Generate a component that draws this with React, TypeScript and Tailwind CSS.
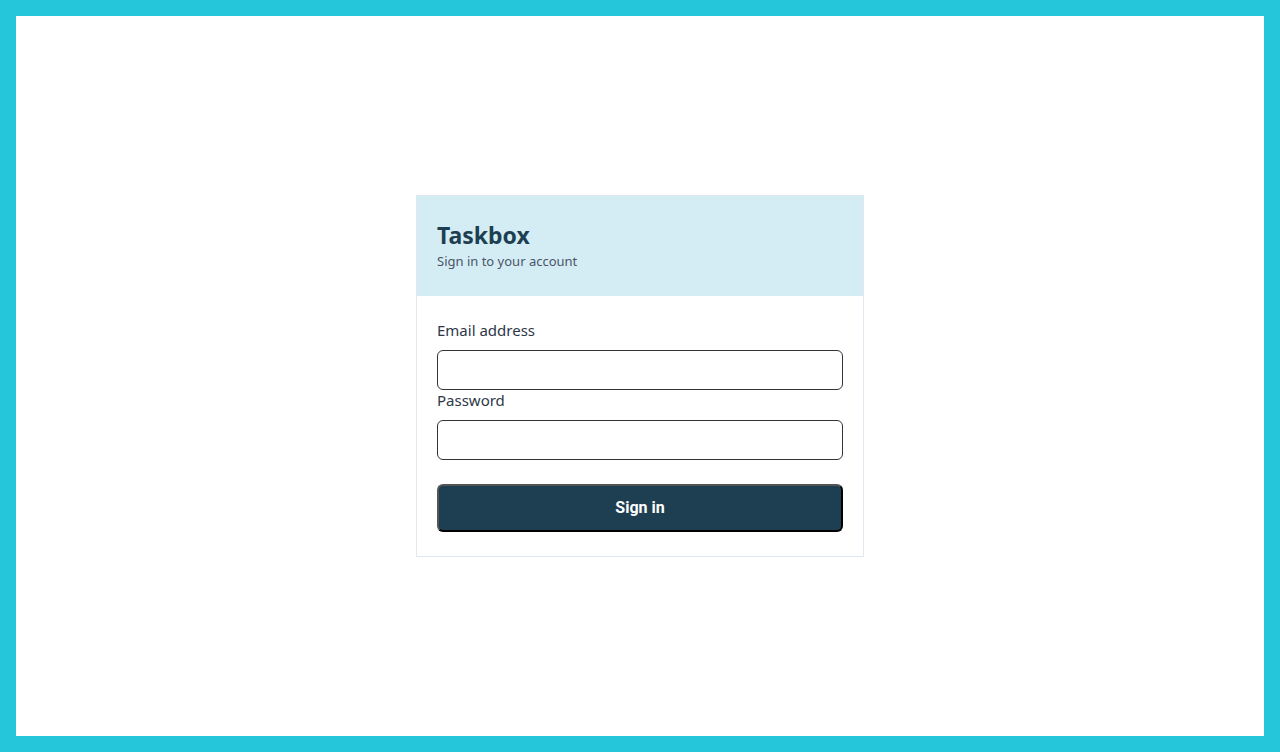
export default function App() {
  return (
    <div className="w-[1280px] h-[752px] bg-[#26c6da] p-4" style={{ fontFamily: '"Noto Sans", Lato, sans-serif' }}>
      <div className="w-full h-full bg-white flex items-center justify-center">
        <div className="w-[448px] border border-[#e2e8f0] bg-white">
          <div className="bg-[#d4edf5] h-[100px] px-5 pt-6">
            <h1 className="text-[23px] leading-[30px] font-bold text-[#1e3f52]">Taskbox</h1>
            <p className="mt-[2px] text-[13px] leading-[18px] text-[#4a5568]">Sign in to your account</p>
          </div>
          <form className="px-5 pt-6 pb-6 flex flex-col" onSubmit={(e) => e.preventDefault()}>
            <label className="text-[15px] leading-5 text-[#2d3748]">Email address</label>
            <input type="email" className="mt-[10px] h-10 w-full border border-[#333] rounded-md px-3 outline-none" />
            <label className="text-[15px] leading-5 text-[#2d3748]">Password</label>
            <input type="password" className="mt-[10px] h-10 w-full border border-[#333] rounded-md px-3 outline-none" />
            <button
              type="submit"
              className="mt-6 h-12 w-full rounded-md bg-[#1e3f52] text-white text-[16px] font-bold border-2 border-t-[#555] border-l-[#555] border-r-black border-b-black"
              style={{ fontFamily: 'Roboto, sans-serif' }}
            >
              Sign in
            </button>
          </form>
        </div>
      </div>
    </div>
  );
}
